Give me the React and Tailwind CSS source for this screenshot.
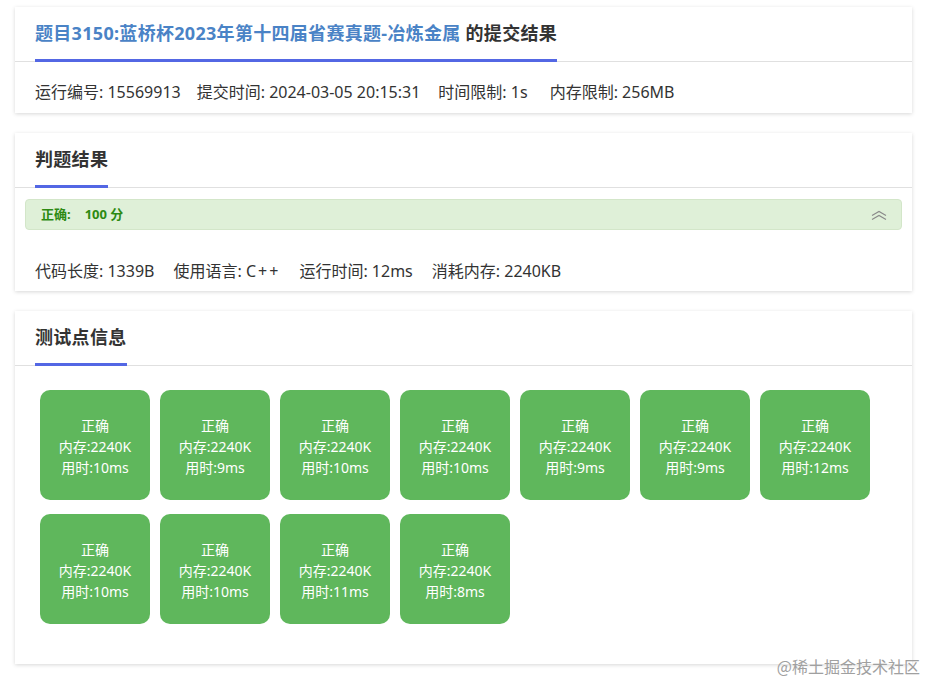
const font = { fontFamily: '"Noto Sans", "Noto Sans CJK SC", sans-serif' };

function CardHeader({ children }) {
  return (
    <div className="border-b border-[#e0e0e0] px-5">
      <div className="relative inline-block pt-[13px] pb-[15px] text-[18px] font-bold leading-[26px] tracking-[0.3px] text-[#333]">
        {children}
        <div className="absolute bottom-[-1px] left-0 right-0 h-[3px] bg-[#5367e4]" />
      </div>
    </div>
  );
}

function Stat({ label, value, className = "", valueClass = "" }) {
  return (
    <span className={className}>
      {label}: <span className={valueClass}>{value}</span>
    </span>
  );
}

const cases = [
  "10ms", "9ms", "10ms", "10ms", "9ms", "9ms", "12ms",
  "10ms", "10ms", "11ms", "8ms",
];

export default function App() {
  return (
    <div className="relative min-h-[684px] bg-white px-[15px] pt-[7px] pb-[20px] text-[#333]" style={font}>
      {/* submission header */}
      <div className="bg-white shadow-[0_1px_4px_rgba(0,0,0,0.16)]">
        <CardHeader>
          <span className="text-[#4a83c6]">题目3150:蓝桥杯2023年第十四届省赛真题-冶炼金属</span> 的提交结果
        </CardHeader>
        <div className="flex px-5 pt-[19px] pb-[10px] text-[16px] leading-[22px] text-[#333]">
          <Stat label="运行编号" value="15569913" />
          <Stat label="提交时间" value="2024-03-05 20:15:31" className="ml-[16px]" />
          <Stat label="时间限制" value="1s" className="ml-[18px]" />
          <Stat label="内存限制" value="256MB" className="ml-[22px]" />
        </div>
      </div>

      {/* judge result */}
      <div className="mt-[20px] bg-white shadow-[0_1px_4px_rgba(0,0,0,0.16)]">
        <CardHeader>判题结果</CardHeader>
        <div className="mx-[10px] mt-[11px] flex h-[31px] items-center justify-between rounded-[4px] border border-[#d3e6c9] bg-[#dff0d8] pl-[15px] pr-[14px]">
          <span className="text-[13px] font-bold text-[#2d8a12]">
            正确:<span className="ml-[14px]">100 分</span>
          </span>
          <svg width="16" height="10" viewBox="0 0 16 10" fill="none" stroke="#8a8a8a" strokeWidth="1.1">
            <path d="M1 5.5 L8 1.5 L15 5.5" />
            <path d="M1 9.5 L8 5.5 L15 9.5" />
          </svg>
        </div>
        <div className="flex px-5 pt-[30px] pb-[9px] text-[16px] leading-[22px]">
          <Stat label="代码长度" value="1339B" />
          <Stat label="使用语言" value="C++" className="ml-[19px]" valueClass="tracking-[2px]" />
          <Stat label="运行时间" value="12ms" className="ml-[19px]" />
          <Stat label="消耗内存" value="2240KB" className="ml-[19px]" />
        </div>
      </div>

      {/* test points */}
      <div className="mt-[20px] bg-white shadow-[0_1px_4px_rgba(0,0,0,0.16)]">
        <CardHeader>测试点信息</CardHeader>
        <div className="flex flex-wrap gap-x-[10px] gap-y-[14px] px-[25px] pt-[24px] pb-[40px]">
          {cases.map((t, i) => (
            <div
              key={i}
              className="flex h-[110px] w-[110px] flex-col items-center justify-center rounded-[10px] bg-[#5fb75c] pt-[3px] text-[14px] leading-[21px] text-white"
            >
              <span>正确</span>
              <span>内存:2240K</span>
              <span>用时:{t}</span>
            </div>
          ))}
        </div>
      </div>

      <div className="absolute bottom-[6px] right-[7px] text-[16px] text-[#a0a0a0]" style={{ fontFamily: '"Noto Sans CJK SC", sans-serif' }}>
        @稀土掘金技术社区
      </div>
    </div>
  );
}
